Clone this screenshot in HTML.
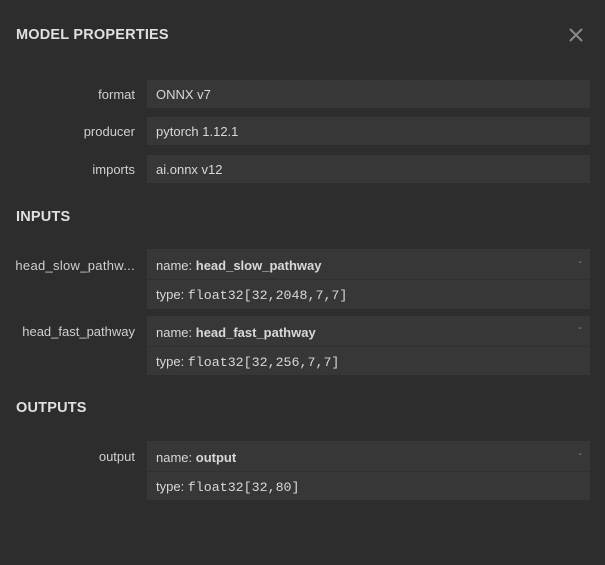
<!DOCTYPE html>
<html><head><style>
body{margin:0;width:605px;height:565px;background:#2d2d2d;font-family:"Liberation Sans",sans-serif;color:#d8d8d8;font-size:13px;position:relative;overflow:hidden}
.a{position:absolute}
.t{left:16px;font-weight:bold;font-size:14.5px;color:#e0e0e0;letter-spacing:0.2px}
.l{right:470px;text-align:right;color:#cfcfcf}
.b{left:147px;width:443px;background:#373737}
.v{left:156px}
.m{font-family:"Liberation Mono",monospace;font-size:13.3px}
.d{right:23px;color:#888;font-size:11px}
</style></head><body>
<div class="a t" style="top:27px">MODEL PROPERTIES</div>
<svg class="a" style="left:569px;top:28px" width="14" height="14"><path d="M1 1L13 13M13 1L1 13" stroke="#8a8a8a" stroke-width="2"/></svg>

<div class="a b" style="top:80px;height:28px"></div>
<div class="a l" style="top:87px">format</div><div class="a v" style="top:87px">ONNX v7</div>
<div class="a b" style="top:117px;height:28px"></div>
<div class="a l" style="top:124px">producer</div><div class="a v" style="top:124px">pytorch 1.12.1</div>
<div class="a b" style="top:155px;height:28px"></div>
<div class="a l" style="top:162px">imports</div><div class="a v" style="top:162px">ai.onnx v12</div>

<div class="a t" style="top:209px">INPUTS</div>
<div class="a b" style="top:249px;height:60px"></div>
<div class="a" style="left:147px;top:279px;width:443px;height:1px;background:#303030"></div>
<div class="a l" style="top:258px;letter-spacing:0.3px">head_slow_pathw...</div>
<div class="a v" style="top:258px">name: <b>head_slow_pathway</b></div>
<div class="a d" style="top:256px">-</div>
<div class="a v" style="top:287px">type: <span class="m">float32[32,2048,7,7]</span></div>

<div class="a b" style="top:316px;height:59px"></div>
<div class="a" style="left:147px;top:346px;width:443px;height:1px;background:#303030"></div>
<div class="a l" style="top:324px">head_fast_pathway</div>
<div class="a v" style="top:325px">name: <b>head_fast_pathway</b></div>
<div class="a d" style="top:322px">-</div>
<div class="a v" style="top:354px">type: <span class="m">float32[32,256,7,7]</span></div>

<div class="a t" style="top:400px">OUTPUTS</div>
<div class="a b" style="top:441px;height:59px"></div>
<div class="a" style="left:147px;top:471px;width:443px;height:1px;background:#303030"></div>
<div class="a l" style="top:449px">output</div>
<div class="a v" style="top:450px">name: <b>output</b></div>
<div class="a d" style="top:448px">-</div>
<div class="a v" style="top:479px">type: <span class="m">float32[32,80]</span></div>
</body></html>
